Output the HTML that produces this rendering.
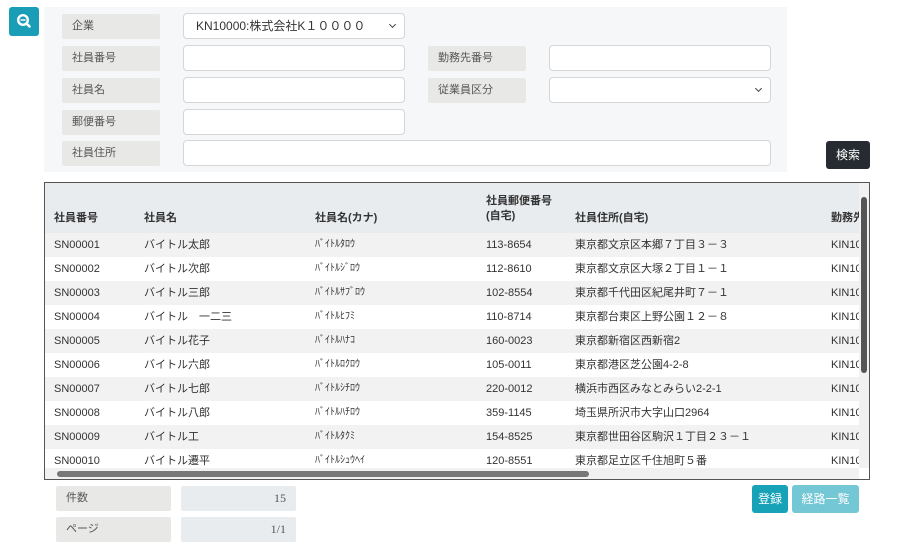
<!DOCTYPE html>
<html><head><meta charset="utf-8"><style>
*{box-sizing:border-box;margin:0;padding:0}
body{width:900px;height:548px;background:#fff;font-family:"Liberation Sans","Noto Sans CJK JP",sans-serif;font-size:11px;color:#333;position:relative;overflow:hidden}
.a{position:absolute}
.panel{left:44px;top:7px;width:743px;height:165px;background:#f6f7f8}
.lbl{background:#e8e9e7;color:#555;height:25px;line-height:25px;padding-left:10px;border-radius:2px;font-size:11px}
.inp{background:#fff;border:1px solid #d4d6d8;border-radius:4px;height:26px}
.sel::after{content:"";position:absolute;right:9px;top:8px;width:4px;height:4px;border-right:1.5px solid #444;border-bottom:1.5px solid #444;transform:rotate(45deg)}
.tbl{left:44px;top:182px;width:826px;height:298px;border:1px solid #555;overflow:hidden;background:#fff}
.hdr{left:0;top:0;width:814px;height:50px;background:#e9ecef;font-weight:bold;color:#333}
.row{left:0;width:814px;height:24px;line-height:24px}
.row span,.hdr span{position:absolute;white-space:nowrap}
</style></head><body>
<div class="a" style="left:9px;top:7px;width:30px;height:29px;background:#1a9db6;border-radius:3px">
<svg width="30" height="29" viewBox="0 0 30 29"><circle cx="14" cy="13" r="4.8" fill="none" stroke="#fff" stroke-width="2.4"/><line x1="17.5" y1="16.5" x2="20.5" y2="19.5" stroke="#fff" stroke-width="2.6" stroke-linecap="round"/><line x1="11.5" y1="13" x2="16.5" y2="13" stroke="#fff" stroke-width="1.5"/></svg></div>
<div class="a panel"></div>
<div class="a lbl" style="left:62px;top:14px;width:98px">企業</div>
<div class="a inp sel" style="left:183px;top:13px;width:222px;padding-left:12px;line-height:24px;font-size:12px;color:#333">KN10000:株式会社K１００００</div>
<div class="a lbl" style="left:62px;top:46px;width:98px">社員番号</div>
<div class="a inp" style="left:183px;top:45px;width:222px"></div>
<div class="a lbl" style="left:428px;top:46px;width:98px">勤務先番号</div>
<div class="a inp" style="left:549px;top:45px;width:222px"></div>
<div class="a lbl" style="left:62px;top:78px;width:98px">社員名</div>
<div class="a inp" style="left:183px;top:77px;width:222px"></div>
<div class="a lbl" style="left:428px;top:78px;width:98px">従業員区分</div>
<div class="a inp sel" style="left:549px;top:77px;width:222px"></div>
<div class="a lbl" style="left:62px;top:110px;width:98px">郵便番号</div>
<div class="a inp" style="left:183px;top:109px;width:222px"></div>
<div class="a lbl" style="left:62px;top:141px;width:98px">社員住所</div>
<div class="a inp" style="left:183px;top:140px;width:588px"></div>
<div class="a" style="left:826px;top:141px;width:44px;height:28px;background:#262b31;color:#fff;border-radius:3px;text-align:center;line-height:28px;font-size:12px">検索</div>
<div class="a tbl">
<div class="a hdr"><span style="left:9px;top:26px">社員番号</span><span style="left:99px;top:26px">社員名</span><span style="left:270px;top:26px">社員名(カナ)</span><span style="left:441px;top:11px;line-height:15px">社員郵便番号<br>(自宅)</span><span style="left:530px;top:26px">社員住所(自宅)</span><span style="left:786px;top:26px">勤務先</span></div>
<div id="rows"></div>
<div class="a" style="left:814px;top:0;width:11px;height:285px;background:#f1f1f1"><div class="a" style="left:2px;top:14px;width:6px;height:176px;background:#555;border-radius:3px"></div></div>
<div class="a" style="left:0;top:285px;width:814px;height:12px;background:#f1f1f1"><div class="a" style="left:12px;top:3px;width:532px;height:6px;background:#777;border-radius:3px"></div></div>
</div>
<div class="a lbl" style="left:56px;top:486px;width:115px;height:25px">件数</div>
<div class="a lbl" style="left:181px;top:486px;width:115px;height:25px;background:#e9ecef;text-align:right;padding-right:10px;font-family:'Liberation Serif',serif;font-size:12px">15</div>
<div class="a lbl" style="left:56px;top:517px;width:115px;height:25px">ページ</div>
<div class="a lbl" style="left:181px;top:517px;width:115px;height:25px;background:#e9ecef;text-align:right;padding-right:10px;font-family:'Liberation Serif',serif;font-size:12px">1/1</div>
<div class="a" style="left:752px;top:485px;width:36px;height:28px;background:#17a2b8;color:#fff;border-radius:3px;text-align:center;line-height:28px;font-size:12px">登録</div>
<div class="a" style="left:792px;top:485px;width:67px;height:28px;background:#74c7d4;color:#fff;border-radius:3px;text-align:center;line-height:28px;font-size:12px">経路一覧</div>
<script>
var d=[["SN00001","バイトル太郎","ﾊﾞｲﾄﾙﾀﾛｳ","113-8654","東京都文京区本郷７丁目３－３"],
["SN00002","バイトル次郎","ﾊﾞｲﾄﾙｼﾞﾛｳ","112-8610","東京都文京区大塚２丁目１－１"],
["SN00003","バイトル三郎","ﾊﾞｲﾄﾙｻﾌﾞﾛｳ","102-8554","東京都千代田区紀尾井町７－１"],
["SN00004","バイトル　一二三","ﾊﾞｲﾄﾙﾋﾌﾐ","110-8714","東京都台東区上野公園１２－８"],
["SN00005","バイトル花子","ﾊﾞｲﾄﾙﾊﾅｺ","160-0023","東京都新宿区西新宿2"],
["SN00006","バイトル六郎","ﾊﾞｲﾄﾙﾛｸﾛｳ","105-0011","東京都港区芝公園4-2-8"],
["SN00007","バイトル七郎","ﾊﾞｲﾄﾙｼﾁﾛｳ","220-0012","横浜市西区みなとみらい2-2-1"],
["SN00008","バイトル八郎","ﾊﾞｲﾄﾙﾊﾁﾛｳ","359-1145","埼玉県所沢市大字山口2964"],
["SN00009","バイトル工","ﾊﾞｲﾄﾙﾀｸﾐ","154-8525","東京都世田谷区駒沢１丁目２３－１"],
["SN00010","バイトル遷平","ﾊﾞｲﾄﾙｼｭｳﾍｲ","120-8551","東京都足立区千住旭町５番"]];
var h="";d.forEach(function(r,i){h+='<div class="a row" style="top:'+(50+i*24)+'px;background:'+(i%2?'#fff':'#f2f2f2')+'"><span style="left:9px">'+r[0]+'</span><span style="left:99px">'+r[1]+'</span><span style="left:270px;font-size:10px">'+r[2]+'</span><span style="left:441px">'+r[3]+'</span><span style="left:530px">'+r[4]+'</span><span style="left:786px">KIN10</span></div>'});
document.getElementById("rows").outerHTML=h;
</script>
</body></html>
